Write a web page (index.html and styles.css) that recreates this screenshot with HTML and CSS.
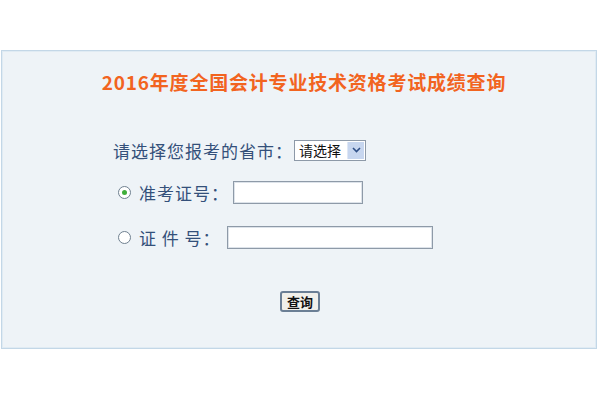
FILE: index.html
```html
<!DOCTYPE html>
<html lang="zh-CN">
<head>
<meta charset="utf-8">
<title>2016年度全国会计专业技术资格考试成绩查询</title>
<link rel="stylesheet" href="styles.css">
</head>
<body>
<div class="panel">
  <h1 class="title">2016年度全国会计专业技术资格考试成绩查询</h1>
  <form class="form">
    <div class="row row-province">
      <span class="label">请选择您报考的省市：</span>
      <div class="select">
        <span class="select-text">请选择</span>
        <span class="select-arrow">
          <svg width="9" height="6" viewBox="0 0 9 6"><path d="M1 1 L4.5 4.5 L8 1" fill="none" stroke="#2f4f86" stroke-width="1.6"/></svg>
        </span>
      </div>
    </div>
    <div class="row row-radio">
      <span class="radio checked"></span>
      <span class="label">准考证号：</span>
      <span class="input input-short"></span>
    </div>
    <div class="row row-radio row-id">
      <span class="radio"></span>
      <span class="label">证 件 号：</span>
      <span class="input input-long"></span>
    </div>
    <div class="row row-button">
      <span class="button">查询</span>
    </div>
  </form>
</div>
</body>
</html>
```
FILE: styles.css
```css
html, body {
  margin: 0;
  padding: 0;
  background: #ffffff;
}
body {
  font-family: "Noto Sans CJK SC", "Noto Sans", sans-serif;
}
.panel {
  box-sizing: border-box;
  width: 596px;
  height: 299px;
  margin: 50px 0 0 1px;
  background: #eef3f7;
  border: 1px solid #c3d7e7;
  box-shadow: inset 0 0 0 1px #e0ebf3;
  padding-top: 19px;
}
.title {
  margin: 0;
  padding-left: 10px;
  text-align: center;
  font-size: 19px;
  letter-spacing: 0.8px;
  line-height: 24px;
  font-weight: 700;
  color: #f2641f;
}
.form {
  display: flex;
  flex-direction: column;
}
.row {
  display: flex;
  align-items: center;
  height: 24px;
  font-size: 17px;
  letter-spacing: 1px;
  color: #34507a;
}
.row-province {
  margin: 44px 0 0 111px;
}
.row-radio {
  margin: 18px 0 0 116px;
}
.row-id {
  margin-top: 21px;
}
.label {
  white-space: pre;
}
.select {
  box-sizing: border-box;
  display: flex;
  align-items: center;
  width: 72px;
  height: 21px;
  margin-left: 1px;
  background: #ffffff;
  border: 1px solid #8d99a8;
  padding: 1px;
}
.select-text {
  flex: 1;
  padding-left: 3px;
  font-size: 14px;
  letter-spacing: 0;
  color: #111111;
  line-height: 17px;
}
.select-arrow {
  display: flex;
  align-items: center;
  justify-content: center;
  width: 16px;
  height: 17px;
  background: #c7d6ef;
  border-left: 1px solid #dfe7f5;
}
.radio {
  box-sizing: border-box;
  width: 13px;
  height: 13px;
  border-radius: 50%;
  border: 1px solid #6f8090;
  background: #ffffff;
  margin-right: 8px;
  display: flex;
  align-items: center;
  justify-content: center;
}
.radio.checked::after {
  content: "";
  width: 5px;
  height: 5px;
  border-radius: 50%;
  background: #3fae3a;
}
.input {
  box-sizing: border-box;
  height: 23px;
  background: #ffffff;
  border: 1px solid #8e9aa8;
  box-shadow: inset 0 0 0 1px #dde3ea;
}
.input-short {
  width: 130px;
  margin-left: 4px;
}
.input-long {
  width: 206px;
  margin-left: 6px;
}
.row-button {
  justify-content: center;
  margin: 42px 0 0 0;
  padding-left: 2px;
  height: 21px;
}
.button {
  box-sizing: border-box;
  width: 40px;
  height: 21px;
  display: flex;
  align-items: center;
  justify-content: center;
  border: 2px solid #6b7f95;
  border-radius: 3px;
  background: #f1f0ea;
  font-size: 13px;
  font-weight: 700;
  letter-spacing: 0;
  color: #111111;
}
```
